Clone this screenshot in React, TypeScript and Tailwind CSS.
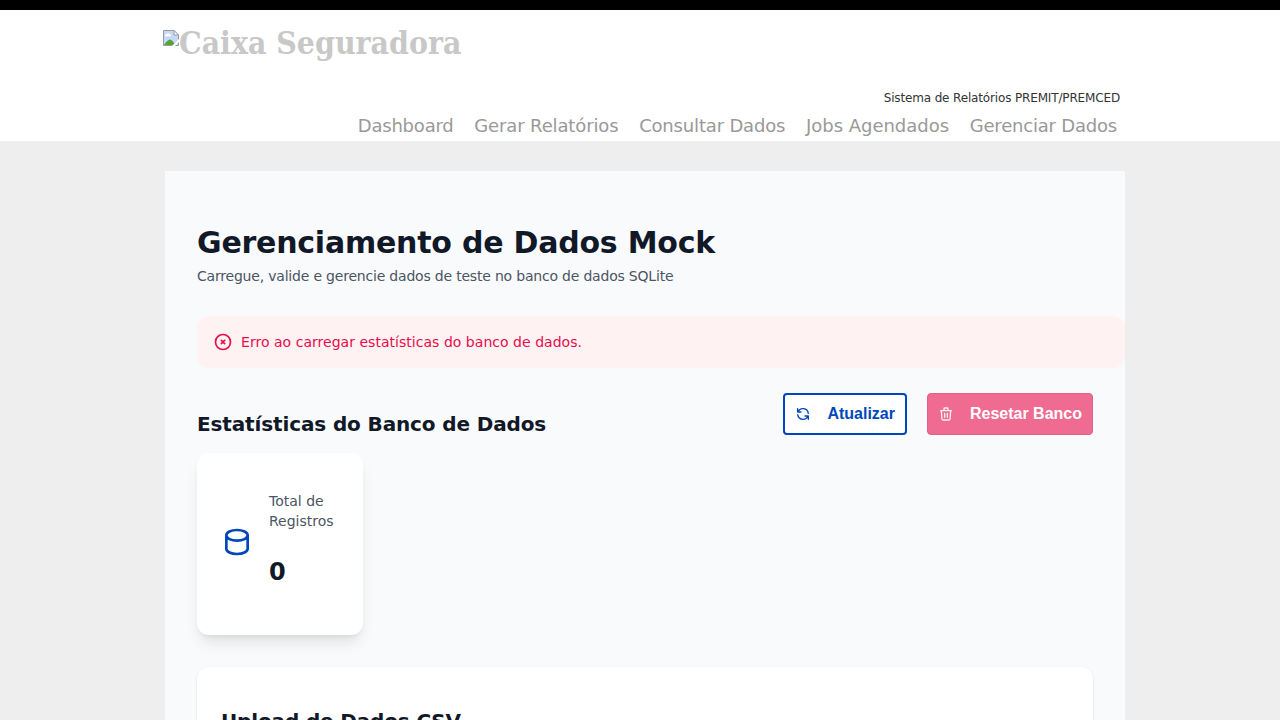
import React from "react";

const nav = [
  { label: "Dashboard", cls: "tracking-[-0.2px]" },
  { label: "Gerar Relatórios", cls: "tracking-[-0.13px]" },
  { label: "Consultar Dados", cls: "tracking-[-0.17px]" },
  { label: "Jobs Agendados", cls: "tracking-[-0.02px]" },
  { label: "Gerenciar Dados", cls: "tracking-[-0.2px]" },
];

const paths = {
  error: "M10 14l2-2m0 0l2-2m-2 2l-2-2m2 2l2 2m7-2a9 9 0 11-18 0 9 9 0 0118 0z",
  refresh:
    "M4 4v5h.582m15.356 2A8.001 8.001 0 004.582 9m0 0H9m11 11v-5h-.581m0 0a8.003 8.003 0 01-15.357-2m15.357 2H15",
  trash:
    "M19 7l-.867 12.142A2 2 0 0116.138 21H7.862a2 2 0 01-1.995-1.858L5 7m5 4v6m4-6v6m1-10V4a1 1 0 00-1-1h-4a1 1 0 00-1 1v3M4 7h16",
  database:
    "M4 7v10c0 2.21 3.582 4 8 4s8-1.79 8-4V7M4 7c0 2.21 3.582 4 8 4s8-1.79 8-4M4 7c0-2.21 3.582-4 8-4s8 1.79 8 4",
};

function Icon({ name, className }: { name: keyof typeof paths; className: string }) {
  return (
    <svg className={className} viewBox="0 0 24 24" fill="none" stroke="currentColor" strokeWidth="2" strokeLinecap="round" strokeLinejoin="round">
      <path d={paths[name]} />
    </svg>
  );
}

function BrokenImage() {
  return (
    <svg className="mt-[10px] h-4 w-4 shrink-0" viewBox="0 0 16 16">
      <path d="M0.5 0.5H11L15.5 5V15.5H0.5Z" fill="#c6d8f8" stroke="#9a9a9a" />
      <path d="M11 0.5V5H15.5Z" fill="#fff" stroke="#9a9a9a" />
      <path d="M2.5 6.5a1.5 1.5 0 0 1 1-2.5a2 2 0 0 1 3.5 0.5a1 1 0 0 1 0.5 2Z" fill="#fff" />
      <path d="M1 15Q4 10 7 9.5Q10 10 12 15Z" fill="#55a63a" />
      <path d="M9 16L16 9V12L12 16Z" fill="#fff" />
    </svg>
  );
}

export default function App() {
  return (
    <div className="h-[720px] overflow-hidden bg-[#eee] font-['DejaVu_Sans',sans-serif]">
      <header className="h-[141px] border-t-[10px] border-black bg-white">
        <div className="ml-[163px] flex h-[70px] w-[957px] items-start pt-[10px]">
          <BrokenImage />
          <span className="mt-px inline-block origin-left scale-x-[0.89] whitespace-nowrap font-['DejaVu_Serif',serif] text-[32px] font-bold leading-[44px] text-[#c8c8c8]">Caixa Seguradora</span>
        </div>
        <div className="flex h-[36px] w-[1120px] items-center justify-end text-[12px] tracking-[-0.15px] text-[#333]">Sistema de Relatórios PREMIT/PREMCED</div>
        <nav className="flex h-5 w-[1117px] items-center justify-end gap-[20.7px] text-[18px] leading-5 text-[#999]">
          {nav.map((n) => <a key={n.label} className={`whitespace-nowrap ${n.cls}`}>{n.label}</a>)}
        </nav>
      </header>
      <main className="ml-[165px] mt-[30px] h-[549px] w-[960px] bg-[#f9fafc] pl-8 pt-[54px]">
        <h1 className="text-[30px] font-bold leading-9 tracking-[-0.23px] text-[#111827]">Gerenciamento de Dados Mock</h1>
        <p className="mt-[5px] text-[14px] leading-5 tracking-[-0.2px] text-[#4b5563]">Carregue, valide e gerencie dados de teste no banco de dados SQLite</p>
        <div className="mt-[30px] flex h-[52px] items-center rounded-xl bg-[#fef2f2] pl-4 text-[14px] text-[#e80c4d]">
          <Icon name="error" className="h-5 w-5" />
          <span className="ml-2 tracking-[0.03px]">Erro ao carregar estatísticas do banco de dados.</span>
        </div>
        <div className="mr-8 mt-[25px] flex h-[42px]">
          <h2 className="mt-[17px] flex-1 text-[20px] font-bold leading-7 tracking-[-0.13px] text-[#111827]">Estatísticas do Banco de Dados</h2>
          <div className="flex gap-5 font-['Liberation_Sans',sans-serif] text-[16px] font-bold">
            <button className="flex h-[42px] w-[124px] items-center justify-between rounded border-2 border-[#0047bb] bg-white px-[10px] text-[#0047bb]">
              <Icon name="refresh" className="h-4 w-4" />
              <span>Atualizar</span>
            </button>
            <button className="flex h-[42px] w-[166px] items-center justify-between rounded border border-[#e26089] bg-[#ef6b92] px-[10px] text-white">
              <Icon name="trash" className="h-4 w-4 opacity-90" />
              <span>Resetar Banco</span>
            </button>
          </div>
        </div>
        <section className="mt-[18px] flex h-[182px] w-[166px] rounded-xl bg-white shadow-lg">
          <Icon name="database" className="ml-6 mt-[73px] h-8 w-8 shrink-0 text-[#0047bb]" />
          <div className="ml-4 pt-[38px] text-[14px] leading-5 text-[#4b5563]">
            Total de<br />Registros
            <p className="mt-[25px] text-[24px] font-bold leading-8 text-[#111827]">0</p>
          </div>
        </section>
        <section className="mr-8 mt-8 h-40 rounded-xl bg-white pl-6 pt-10 shadow-sm">
          <h2 className="text-[20px] font-bold leading-7 tracking-[-0.15px] text-[#111827]">Upload de Dados CSV</h2>
        </section>
      </main>
    </div>
  );
}
